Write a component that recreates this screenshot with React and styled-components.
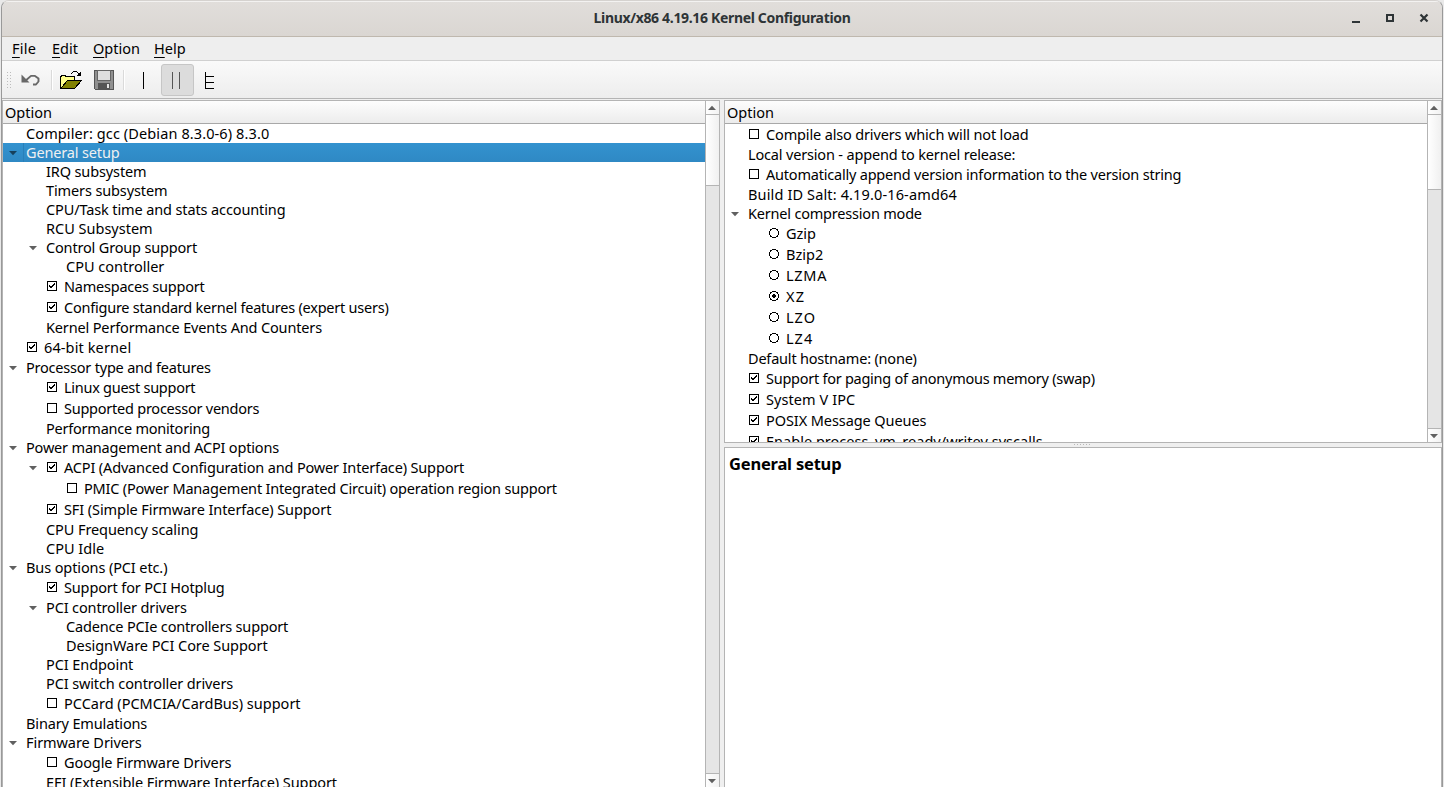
import React from 'react';
import styled, { createGlobalStyle } from 'styled-components';

const Global = createGlobalStyle`
  * { box-sizing: border-box; }
  html, body { margin: 0; background: #e9e9e9; overflow: hidden; }
  body { font: 15px/19px "Noto Sans", "Open Sans", sans-serif; color: #000; }
`;

const Window = styled.div`
  width: 1442px; height: 787px; margin-left: 1px;
  display: flex; flex-direction: column;
  background: #efefef; overflow: hidden;
  border: solid #999; border-width: 1px 1px 0;
  border-top-color: #d5d2cf;
  border-radius: 8px 8px 0 0;
`;
const TitleBar = styled.header`
  height: 36px; flex: none; display: grid; grid-template-columns: 1fr auto 1fr; align-items: center;
  background: linear-gradient(#e1dedb, #dad6d2);
  border-bottom: 1px solid #bfb8ae;
  box-shadow: inset 0 1px #f3f2f1;
`;
const Title = styled.h1`
  grid-column: 2; margin: 0 0 1px; font-size: 14px; font-weight: 700; color: #2e3436;
  line-height: 20px; letter-spacing: ${p => p.$track}px; white-space: nowrap;
`;
const WindowButtons = styled.div`
  justify-self: end; display: flex; gap: 22px; margin: 0 12px 1px 0;
  svg { display: block; }
`;
const MenuBar = styled.nav`
  height: 24px; flex: none; display: flex; gap: 15px; padding: 2px 0 0 10px;
  border-bottom: 1px solid #d0d0d0; background: #eeeeee;
  font-size: 14.5px;
`;
const MenuItem = styled.span`
  width: ${p => p.$w}px; white-space: nowrap; letter-spacing: ${p => p.$track || 0}px;
  u { text-underline-offset: 3px; text-decoration-thickness: 1px; }
`;
const ToolBar = styled.div`
  height: 38px; flex: none; display: flex; align-items: center;
  background: linear-gradient(#fafafa, #ededed); border-bottom: 1px solid #b4b4b4;
  padding-left: 4px;
`;
const Tool = styled.button`
  width: 33px; height: 32px; padding: 0; display: grid; place-items: center;
  border: 1px solid ${p => (p.$on ? '#c6c6c6' : 'transparent')}; border-radius: 3px;
  background: ${p => (p.$on ? '#dcdcdc' : 'transparent')};
`;
const Separator = styled.i`
  width: 2px; height: 20px; margin: 0 ${p => p.$after}px 0 ${p => p.$before}px;
  border-left: 1px solid #dadada; border-right: 1px solid #fff;
`;
const Main = styled.main`
  flex: 1; min-height: 0; display: flex; gap: 4px; padding-top: 1px;
`;
const RightColumn = styled.div`
  width: 718px; display: flex; flex-direction: column;
`;
const Pane = styled.section`
  display: flex; background: #fff; overflow: hidden;
  border: 1px solid #b4b4b4; border-bottom-width: ${p => (p.$open ? 0 : 1)}px;
  width: ${p => p.$w}px; height: ${p => p.$h}px; flex: none;
`;
const List = styled.div`
  flex: 1; min-width: 0; overflow: hidden;
`;
const ColumnHeader = styled.div`
  height: 23px; padding: 2px 0 0 2px; background: linear-gradient(#fdfdfd, #ececec);
  border-bottom: 1px solid #a8a8a8; font-size: 14.5px;
`;
const Row = styled.div`
  height: ${p => (p.$mark ? 21 : 19)}px; display: flex; align-items: center;
  padding-left: ${p => p.$depth * 20 + 3}px;
  color: ${p => (p.$selected ? '#eff0f1' : '#000')};
  background: ${p => (p.$selected ? 'linear-gradient(90deg, #2980b9 0 0) 20px 0 / 1px 100% no-repeat, linear-gradient(#3392cf, #2f89c4)' : 'none')};
`;
const Branch = styled.span`
  width: 20px; flex: none; padding-left: 2.5px;
  svg { display: block; }
`;
const Mark = styled.span`
  width: 18px; flex: none; padding-left: 1px; 
  svg { display: block; margin-top: -1px; }
`;
const Label = styled.span`
  white-space: pre; font-size: 14.5px; line-height: 19px; letter-spacing: ${p => p.$track || 0}px;
`;
const ScrollBar = styled.div`
  width: 14px; flex: none; display: flex; flex-direction: column;
  border-left: 1px solid #b4b4b4; background: #e5e5e5;
`;
const ScrollButton = styled.div`
  height: 13px; flex: none; display: grid; place-items: center; padding-right: 1px; background: linear-gradient(90deg, #fefefe, #f2f2f2);
`;
const Thumb = styled.div`
  height: ${p => p.$h}px; border: solid #b4b4b4; border-width: 1px 0;
  background: linear-gradient(90deg, #ffffff, #f0f0f0);
`;
const Groove = styled.div`flex: 1; border-bottom: 1px solid #b4b4b4;`;
const SplitHandle = styled.div`
  height: 4px; flex: none; display: grid; place-items: center;
`;
const HelpTitle = styled.h2`
  margin: 5px 0 0 4px; font-size: 16.5px; line-height: 22px; font-weight: 700; letter-spacing: ${p => p.$track}px;
`;

const Arrow = ({ up, color = '#606060' }) => (
  <svg width="8" height="6" viewBox="0 0 8 6">
    <path d={up ? 'M0 5h8L4 .8z' : 'M0 1h8L4 5.2z'} fill={color} />
  </svg>
);

const RADIO = ['3,0,4,1', '1,1,2,1', '7,1,2,1', '1,2,1,1', '8,2,1,1', '0,3,1,4', '9,3,1,4', '1,7,1,1', '8,7,1,1', '1,8,2,1', '7,8,2,1', '3,9,4,1'];
const Rects = ({ list }) => list.map(r => {
  const [x, y, w, h] = r.split(',');
  return <rect key={r} x={x} y={y} width={w} height={h} />;
});

const Glyph = ({ kind }) => (
  <svg width="10" height="10" viewBox="0 0 10 10" shapeRendering="crispEdges">
    {kind[0] === 'r' ? <Rects list={RADIO} /> : <path d="M.5 .5h9v9h-9z" fill="none" stroke="#000" />}
    {kind === 'r1' && <Rects list={['4,3,2,1', '3,4,4,2', '4,6,2,1']} />}
    {kind === 'c1' && <Rects list={['7,2,1,2', '6,3,1,2', '5,4,1,2', '4,5,1,2', '3,5,1,2', '2,4,1,2']} />}
  </svg>
);

// depth, text, open, mark, tracking
const LEFT = [
  [0, 'Compiler: gcc (Debian 8.3.0-6) 8.3.0', 0, '', 0.11],
  [0, 'General setup', 1, '', -0.15],
  [1, 'IRQ subsystem', 0, '', -0.12],
  [1, 'Timers subsystem', 0, '', -0.12],
  [1, 'CPU/Task time and stats accounting', 0, '', -0.12],
  [1, 'RCU Subsystem'],
  [1, 'Control Group support', 1, '', -0.17],
  [2, 'CPU controller'],
  [1, 'Namespaces support', 0, 'c1', -0.22],
  [1, 'Configure standard kernel features (expert users)', 0, 'c1', -0.23],
  [1, 'Kernel Performance Events And Counters', 0, '', -0.15],
  [0, '64-bit kernel', 0, 'c1', 0.12],
  [0, 'Processor type and features', 1, '', -0.21],
  [1, 'Linux guest support', 0, 'c1', -0.27],
  [1, 'Supported processor vendors', 0, 'c0', -0.24],
  [1, 'Performance monitoring', 0, '', -0.23],
  [0, 'Power management and ACPI options', 1, '', -0.18],
  [1, 'ACPI (Advanced Configuration and Power Interface) Support', 1, 'c1', -0.155],
  [2, 'PMIC (Power Management Integrated Circuit) operation region support', 0, 'c0', -0.19],
  [1, 'SFI (Simple Firmware Interface) Support', 0, 'c1', -0.09],
  [1, 'CPU Frequency scaling', 0, '', -0.09],
  [1, 'CPU Idle'],
  [0, 'Bus options (PCI etc.)', 1, '', -0.11],
  [1, 'Support for PCI Hotplug', 0, 'c1', -0.15],
  [1, 'PCI controller drivers', 1, '', -0.13],
  [2, 'Cadence PCIe controllers support', 0, '', -0.17],
  [2, 'DesignWare PCI Core Support', 0, '', -0.06],
  [1, 'PCI Endpoint', 0, '', -0.08],
  [1, 'PCI switch controller drivers', 0, '', -0.12],
  [1, 'PCCard (PCMCIA/CardBus) support', 0, 'c0'],
  [0, 'Binary Emulations', 0, '', -0.14],
  [0, 'Firmware Drivers', 1, '', -0.07],
  [1, 'Google Firmware Drivers', 0, 'c0', -0.09],
  [1, 'EFI (Extensible Firmware Interface) Support', 0, '', -0.08],
];
const RIGHT = [
  [0, 'Compile also drivers which will not load', 0, 'c0', -0.15],
  [0, 'Local version - append to kernel release:', 0, '', -0.17],
  [0, 'Automatically append version information to the version string', 0, 'c0', -0.21],
  [0, 'Build ID Salt: 4.19.0-16-amd64', 0, '', 0.14],
  [0, 'Kernel compression mode', 1, '', -0.2],
  [1, 'Gzip', 0, 'r0'],
  [1, 'Bzip2', 0, 'r0'],
  [1, 'LZMA', 0, 'r0', 0.7],
  [1, 'XZ', 0, 'r1', 1.2],
  [1, 'LZO', 0, 'r0', 1],
  [1, 'LZ4', 0, 'r0', 1],
  [0, 'Default hostname: (none)', 0, '', -0.2],
  [0, 'Support for paging of anonymous memory (swap)', 0, 'c1', -0.26],
  [0, 'System V IPC', 0, 'c1', 0.07],
  [0, 'POSIX Message Queues', 0, 'c1', -0.08],
  [0, 'Enable process_vm_ready/writev syscalls', 0, 'c1', 0.02],
];

const Tree = ({ rows, selected }) => rows.map(([depth, text, open, mark, track]) => (
  <Row key={text} $depth={depth} $mark={!!mark} $selected={text === selected}>
    <Branch>{open ? <Arrow color={text === selected ? '#16405c' : undefined} /> : null}</Branch>
    {mark && <Mark><Glyph kind={mark} /></Mark>}
    <Label $track={track}>{text}</Label>
  </Row>
));

const Scroller = ({ thumb }) => (
  <ScrollBar>
    <ScrollButton><Arrow up /></ScrollButton>
    <Thumb $h={thumb} />
    <Groove />
    <ScrollButton><Arrow /></ScrollButton>
  </ScrollBar>
);

export default function App() {
  return (
    <>
      <Global />
      <Window>
        <TitleBar>
          <Title $track={-0.33}>Linux/x86 4.19.16 Kernel Configuration</Title>
          <WindowButtons>
            <svg width="12" height="12"><path d="M2 9h8v2H2z" fill="#2e3436" /></svg>
            <svg width="12" height="12"><path d="M3 3h6v6H3z" fill="none" stroke="#2e3436" strokeWidth="2" /></svg>
            <svg width="12" height="12"><path d="M2.5 2.5l7 7M9.5 2.5l-7 7" stroke="#2e3436" strokeWidth="2.200" /></svg>
          </WindowButtons>
        </TitleBar>
        <MenuBar>
          <MenuItem $w={25} $track={0.25}><u>F</u>ile</MenuItem>
          <MenuItem $w={26}><u>E</u>dit</MenuItem>
          <MenuItem $w={46}><u>O</u>ption</MenuItem>
          <MenuItem $w={40}><u>H</u>elp</MenuItem>
        </MenuBar>
        <ToolBar>
          <svg width="6" height="18" shapeRendering="crispEdges">
            {[0, 3, 6, 9, 12, 15].map(y => (
              <path key={y} d={`M1 ${y + 1}h1v1h-1zM4 ${y + 1}h1v1h-1z`} fill="#bdbdbd" />
            ))}
          </svg>
          <Tool>
            <svg width="24" height="16" viewBox="0 0 24 16">
              <path d="M9 8.300L14 3.900H18L21.500 6.500V9.500L19 12.500H16" fill="none" stroke="#686868" strokeWidth="1.900" strokeLinejoin="round" />
              <path d="M4.500 2.500v8h8z" fill="#686868" />
            </svg>
          </Tool>
          <Separator $before={6} $after={1} />
          <Tool>
            <svg width="22" height="18" viewBox="0 0 22 18" shapeRendering="crispEdges">
              <path d="M1 16V6l2-1h3l2 1h6v4H7l-5 7z" fill="#ffff8c" />
              <path d="M.5 17.500V5.500h1v-1h4v1h9v4" fill="none" stroke="#000" />
              <path d="M7.500 9.500h14l-7 8H.8z" fill="#808000" stroke="#000" />
              <path d="M11.500 2.500L13.500 .8h3l2 2" fill="none" stroke="#000" />
              <path d="M21 0v5h-5z" fill="#000" />
            </svg>
          </Tool>
          <Tool>
            <svg width="20" height="20" viewBox="0 0 20 20" shapeRendering="crispEdges">
              <path d="M.5 .5h19v19h-18l-1-1z" fill="#909090" stroke="#555" />
              <path d="M3.500 .5h13v10h-13z" fill="#dedede" stroke="#666" />
              <path d="M4 13h12v6H4z" fill="#555" />
              <path d="M13 14h2v4h-2z" fill="#e5e5e5" />
            </svg>
          </Tool>
          <Separator $before={3} $after={3} />
          <Tool><svg width="20" height="20" shapeRendering="crispEdges"><path d="M8 2h1v17H8z" /></svg></Tool>
          <Tool $on><svg width="20" height="20" shapeRendering="crispEdges"><path d="M4 2h1v17H4zM11 2h1v17h-1z" fill="#555" /></svg></Tool>
          <Tool>
            <svg width="20" height="20" shapeRendering="crispEdges">
              <path d="M4.500 2v17M4 6.500h9M4 12.500h9M4 18.500h9" fill="none" stroke="#000" />
            </svg>
          </Tool>
        </ToolBar>
        <Main>
          <Pane $w={718} $open>
            <List>
              <ColumnHeader>Option</ColumnHeader>
              <Tree rows={LEFT} selected="General setup" />
            </List>
            <Scroller thumb={72} />
          </Pane>
          <RightColumn>
            <Pane $h={343}>
              <List>
                <ColumnHeader>Option</ColumnHeader>
                <Tree rows={RIGHT} />
              </List>
              <Scroller thumb={76} />
            </Pane>
            <SplitHandle>
              <svg width="18" height="2" shapeRendering="crispEdges">
                <path d="M0 .5h18" stroke="#b8b8b8" strokeDasharray="1 2" />
              </svg>
            </SplitHandle>
            <Pane $h={340} $open>
              <HelpTitle $track={-0.2}>General setup</HelpTitle>
            </Pane>
          </RightColumn>
        </Main>
      </Window>
    </>
  );
}
